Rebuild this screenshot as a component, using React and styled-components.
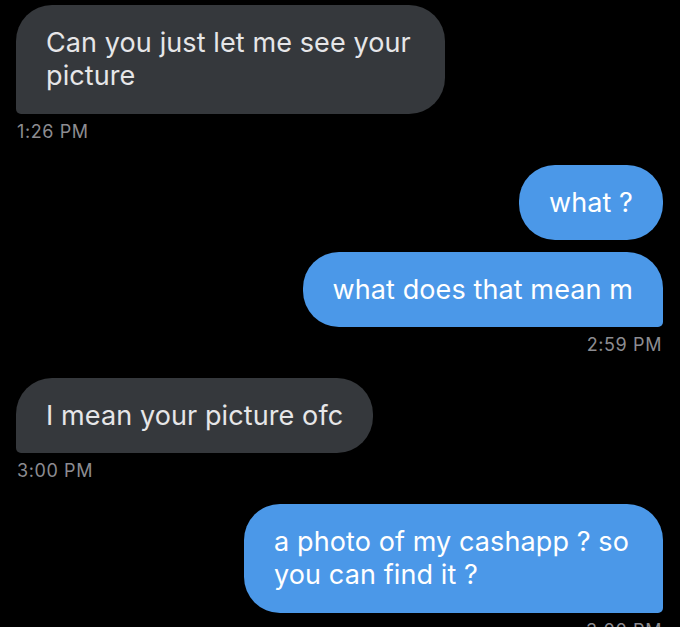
import React from 'react';
import styled, { createGlobalStyle } from 'styled-components';

const GlobalStyle = createGlobalStyle`
  html, body {
    margin: 0;
    padding: 0;
    background: #000;
    overflow: hidden;
  }
  body {
    font-family: 'Inter', 'Liberation Sans', sans-serif;
    -webkit-font-smoothing: antialiased;
  }
`;

const Thread = styled.div`
  display: flex;
  flex-direction: column;
  padding: 5px 17px 0 16px;
  width: 680px;
  box-sizing: border-box;
`;

const Group = styled.div`
  display: flex;
  flex-direction: column;
  align-items: ${p => (p.$mine ? 'flex-end' : 'flex-start')};
  gap: 12px;
  margin-bottom: 23px;
`;

const Bubble = styled.div`
  box-sizing: border-box;
  width: fit-content;
  padding: 21px ${p => (p.$wrapped ? '34px' : '30px')} 21px 30px;
  min-height: ${p => (p.$wrapped ? '109px' : '75px')};
  font-size: 27px;
  line-height: 33px;
  letter-spacing: 0.1px;
  color: ${p => (p.$mine ? '#ffffff' : '#e6e6e8')};
  background: ${p => (p.$mine ? '#4b98e8' : '#35383c')};
  border-radius: ${p =>
    p.$tail
      ? p.$mine
        ? '36px 36px 5px 36px'
        : '36px 36px 36px 5px'
      : '36px'};
`;

const Stamp = styled.div`
  margin-top: -4px;
  padding: 0 1px;
  font-size: 18px;
  line-height: 20px;
  letter-spacing: 0.6px;
  color: #8c8c91;
`;

const groups = [
  {
    mine: false,
    messages: [['Can you just let me see your', 'picture']],
    time: '1:26 PM',
  },
  {
    mine: true,
    messages: [['what ?'], ['what does that mean m']],
    time: '2:59 PM',
  },
  {
    mine: false,
    messages: [['I mean your picture ofc']],
    time: '3:00 PM',
  },
  {
    mine: true,
    messages: [['a photo of my cashapp ? so', 'you can find it ?']],
    time: '3:00 PM',
  },
];

export default function App() {
  return (
    <>
      <GlobalStyle />
      <Thread>
        {groups.map((g, gi) => (
          <Group key={gi} $mine={g.mine}>
            {g.messages.map((lines, mi) => (
              <Bubble
                key={mi}
                $mine={g.mine}
                $wrapped={lines.length > 1}
                $tail={mi === g.messages.length - 1}
              >
                {lines.map((line, li) => (
                  <React.Fragment key={li}>
                    {li > 0 && <br />}
                    {line}
                  </React.Fragment>
                ))}
              </Bubble>
            ))}
            <Stamp>{g.time}</Stamp>
          </Group>
        ))}
      </Thread>
    </>
  );
}
